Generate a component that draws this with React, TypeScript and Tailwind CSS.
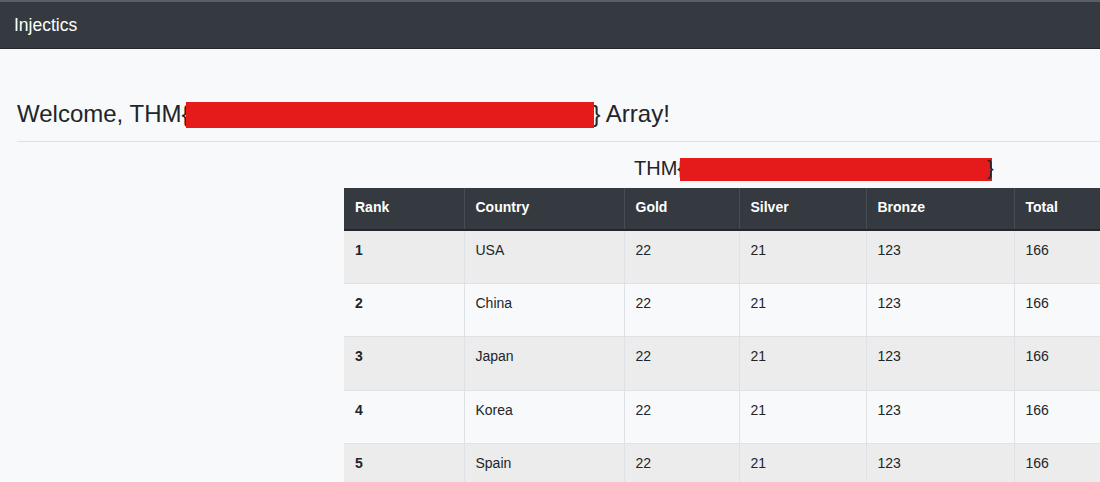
const rows = [
  { rank: 1, country: 'USA' },
  { rank: 2, country: 'China' },
  { rank: 3, country: 'Japan' },
  { rank: 4, country: 'Korea' },
  { rank: 5, country: 'Spain' },
]

const columns = [
  { label: 'Rank', width: 'w-[120px]' },
  { label: 'Country', width: 'w-[160px]' },
  { label: 'Gold', width: 'w-[115px]' },
  { label: 'Silver', width: 'w-[127px]' },
  { label: 'Bronze', width: 'w-[148px]' },
  { label: 'Total', width: 'w-[274px]' },
]

function Redacted({ className }: { className: string }) {
  return <span className={`inline-block bg-[#e51b1b] align-middle ${className}`} />
}

export default function App() {
  return (
    <div className="min-h-[482px] w-[1100px] overflow-hidden bg-[#f8f9fa] font-['Liberation_Sans',Arial,sans-serif] text-[#212529]">
      {/* Navbar */}
      <nav className="flex h-[48px] items-center border-t-2 border-[#5a5f65] bg-[#343a40] px-[14px] pt-[1px] shadow-[0_1px_0_#23272b]">
        <span className="text-[17.5px] text-white">Injectics</span>
      </nav>

      <div className="w-[1290px] pl-[17px]">
        <h3 className="mt-[51px] mb-[12px] text-[24px] leading-[29px] whitespace-nowrap">
          Welcome, THM{'{'}
          <Redacted className="-ml-[4px] -mr-[1px] h-[26px] w-[408px] -translate-y-[1px]" />
          {'}'} Array!
        </h3>
        <hr className="border-0 border-t border-[#dee2e6]" />

        <div className="flex">
          <div className="w-[327px] shrink-0" />
          <div className="flex-1">
            <div className="mt-[14px] mb-[7px] pl-[290px] text-[20px] leading-[24px] whitespace-nowrap">
              THM{'{'}
              <Redacted className="-ml-[4px] -mr-[5px] h-[23px] w-[312px]" />
              {'}'}
            </div>

            <table className="border-collapse text-[14px] leading-[20px]">
              <thead>
                <tr className="h-[42px] bg-[#343a40] text-white">
                  {columns.map((col, i) => (
                    <th
                      key={col.label}
                      className={`${col.width} border-b-2 border-[#23272b] px-[11px] pb-[2px] text-left font-bold ${
                        i > 0 ? 'border-l border-l-[#454d55]' : ''
                      }`}
                    >
                      {col.label}
                    </th>
                  ))}
                </tr>
              </thead>
              <tbody>
                {rows.map((row, idx) => (
                  <tr
                    key={row.rank}
                    className={`h-[53.4px] border-t border-[#dee2e6] ${idx % 2 === 0 ? 'bg-[#ececec]' : 'bg-[#f8f9fa]'}`}
                  >
                    <td className="border-r border-[#dee2e6] px-[11px] pt-[9px] align-top font-bold">{row.rank}</td>
                    <td className="border-r border-[#dee2e6] px-[11px] pt-[9px] align-top">{row.country}</td>
                    <td className="border-r border-[#dee2e6] px-[11px] pt-[9px] align-top">22</td>
                    <td className="border-r border-[#dee2e6] px-[11px] pt-[9px] align-top">21</td>
                    <td className="border-r border-[#dee2e6] px-[11px] pt-[9px] align-top">123</td>
                    <td className="px-[11px] pt-[9px] align-top">166</td>
                  </tr>
                ))}
              </tbody>
            </table>
          </div>
        </div>
      </div>
    </div>
  )
}
